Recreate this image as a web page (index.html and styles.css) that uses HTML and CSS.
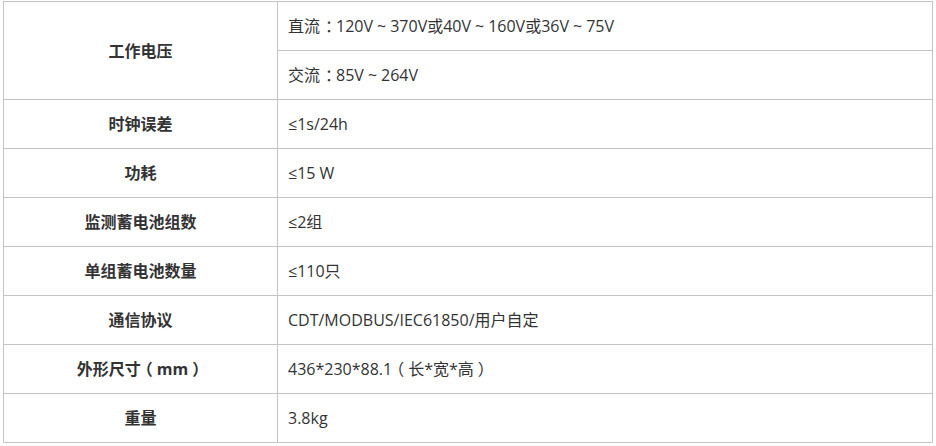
FILE: index.html
```html
<!DOCTYPE html>
<html lang="zh-CN">
<head>
<meta charset="utf-8">
<link rel="stylesheet" href="styles.css">
</head>
<body>
<table class="spec">
  <tbody>
    <tr>
      <th class="label" rowspan="2">工作电压</th>
      <td class="value">直<span class="sp5">流</span><span class="sn5">：</span>120V<span class="wave">~</span>370V或40V<span class="wave">~</span>160V或36V<span class="wave">~</span>75V</td>
    </tr>
    <tr>
      <td class="value">交<span class="sp5">流</span><span class="sn5">：</span>85V<span class="wave">~</span>264V</td>
    </tr>
    <tr>
      <th class="label">时钟误差</th>
      <td class="value">≤1s/24h</td>
    </tr>
    <tr>
      <th class="label">功耗</th>
      <td class="value">≤15 W</td>
    </tr>
    <tr>
      <th class="label">监测蓄电池组数</th>
      <td class="value">≤2组</td>
    </tr>
    <tr>
      <th class="label">单组蓄电池数量</th>
      <td class="value">≤110只</td>
    </tr>
    <tr>
      <th class="label">通信协议</th>
      <td class="value">CDT/MODBUS/IEC61850/用户自定</td>
    </tr>
    <tr>
      <th class="label">外形尺<span class="sn4">寸</span><span class="sp4">（</span>m<span class="sp4">m</span><span class="sn4">）</span></th>
      <td class="value">436*230*88.<span class="sn4">1</span><span class="sp4">（</span>长*宽*<span class="sp4">高</span><span class="sn4">）</span></td>
    </tr>
    <tr>
      <th class="label">重量</th>
      <td class="value">3.8kg</td>
    </tr>
  </tbody>
</table>
</body>
</html>
```
FILE: styles.css
```css
html, body {
  margin: 0;
  padding: 0;
  background: #ffffff;
}
body {
  padding: 1px 0 0 3px;
  font-family: "Open Sans", "Noto Sans CJK SC", sans-serif;
  font-size: 16px;
  color: #333333;
}
.spec {
  border-collapse: collapse;
  width: 930px;
  table-layout: fixed;
}
.spec th, .spec td {
  border: 1px solid #c4c4c4;
  height: 48px;
  padding: 0 10px;
  box-sizing: border-box;
  line-height: 20px;
}
.spec tr {
  height: 49px;
}
.label {
  width: 274px;
  text-align: center;
  font-weight: bold;
}
.value {
  text-align: left;
  font-weight: normal;
}
.sp5 {
  letter-spacing: 5px;
}
.sn5 {
  letter-spacing: -5px;
}
.sp4 {
  letter-spacing: 4px;
}
.sn4 {
  letter-spacing: -4px;
}
.wave {
  display: inline-block;
  padding: 0 4px;
}
```
